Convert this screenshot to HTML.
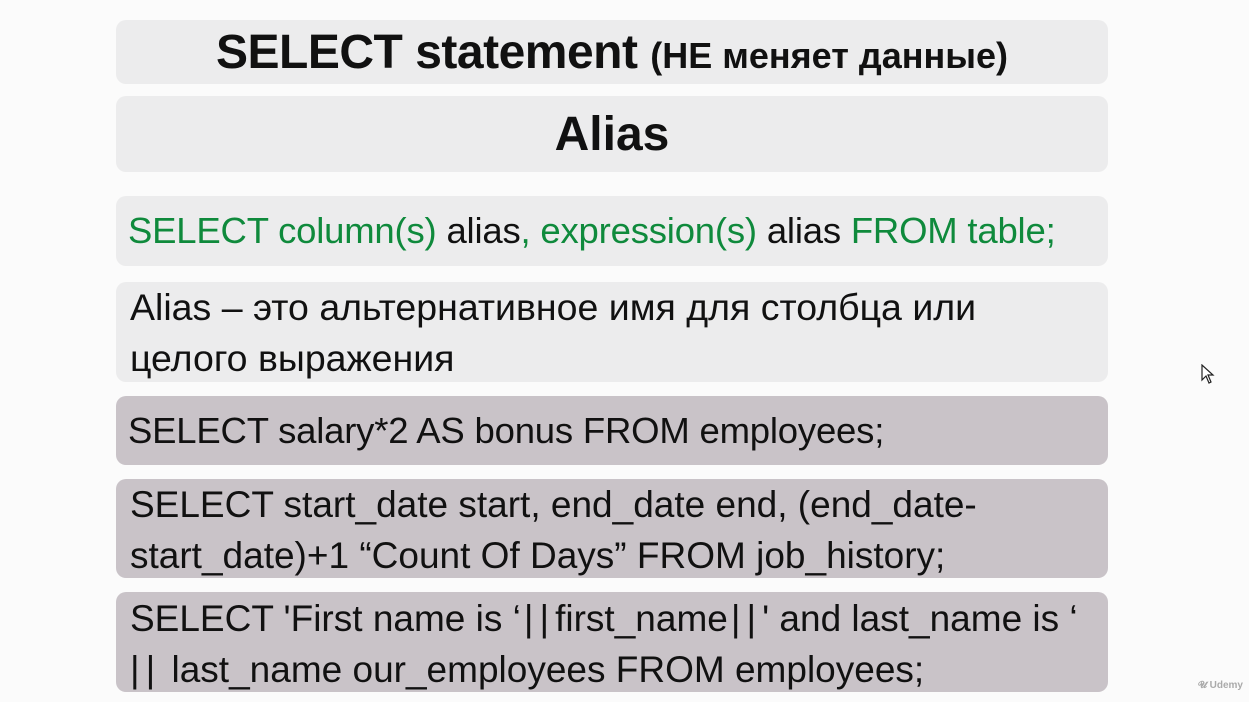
<!DOCTYPE html>
<html><head><meta charset="utf-8"><style>
body{margin:0;width:1249px;height:702px;background:#fbfbfb;overflow:hidden;font-family:"Liberation Sans","DejaVu Sans",sans-serif;color:#111;position:relative}
.b{position:absolute;left:116px;width:992px;border-radius:10px;background:#ececed;box-sizing:border-box}
.d{background:#c9c3c8}
.t{font-size:37px;padding-left:12px;line-height:51px;letter-spacing:-0.2px;white-space:nowrap}
.g{color:#0f8a3c}
.c{text-align:center;font-weight:bold}
.p{letter-spacing:6px;padding-left:3px}
</style></head><body>
<div class="b c" style="top:20px;height:64px;font-size:48px;line-height:66px;letter-spacing:-0.5px">SELECT statement <span style="font-size:36px;letter-spacing:0">(НЕ меняет данные)</span></div>
<div class="b c" style="top:96px;height:76px;font-size:48px;line-height:78px">Alias</div>
<div class="b t" style="top:196px;height:70px;line-height:70px;padding-left:12px;font-size:36.5px"><span class="g">SELECT column(s)</span> alias<span class="g">, expression(s)</span> alias <span class="g">FROM table;</span></div>
<div class="b t" style="top:282px;height:100px;padding-top:0;padding-left:14px;font-size:37.5px;letter-spacing:0">Alias – это альтернативное имя для столбца или<br>целого выражения</div>
<div class="b d t" style="top:396px;height:69px;line-height:69px;font-size:36.5px">SELECT salary*2 AS bonus FROM employees;</div>
<div class="b d t" style="top:479px;height:99px;padding-top:0px;padding-left:14px;letter-spacing:0">SELECT start_date start, end_date end, (end_date-<br>start_date)+1 “Count Of Days” FROM job_history;</div>
<div class="b d t" style="top:592px;height:100px;padding-top:1px;padding-left:14px;letter-spacing:0">SELECT 'First name is ‘<span class="p">||</span>first_name<span class="p">||</span>' and last_name is ‘<br><span class="p" style="padding-left:0">||</span> last_name our_employees FROM employees;</div>
<svg style="position:absolute;left:1201px;top:364px" width="14" height="20" viewBox="0 0 14 20"><path d="M1 1 L1 16 L5 12 L8 19 L10 18 L7 11 L12 11 Z" fill="#fff" stroke="#222" stroke-width="1.2"/></svg>
<div style="position:absolute;left:1198px;top:680px;font-size:10px;color:#aaa;font-weight:bold">𝓤 Udemy</div>
</body></html>
